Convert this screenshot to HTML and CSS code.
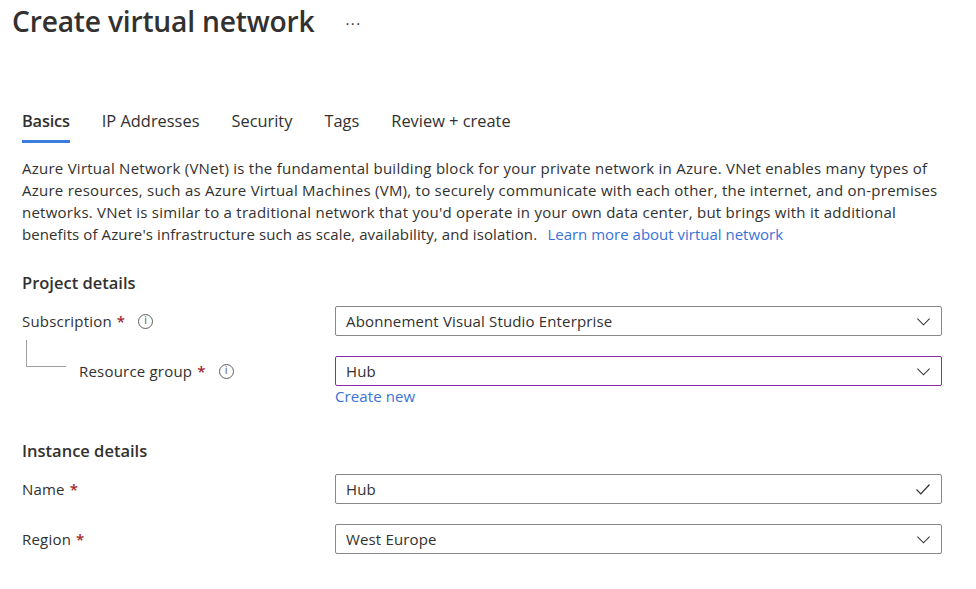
FILE: index.html
```html
<!DOCTYPE html>
<html lang="en">
<head>
<meta charset="utf-8">
<title>Create virtual network</title>
<link rel="stylesheet" href="styles.css">
</head>
<body>
<header class="page-header">
  <h1 class="title">Create virtual network</h1>
  <span class="more">···</span>
</header>
<main class="content">
  <nav class="tabs">
    <span class="tab active">Basics</span>
    <span class="tab">IP Addresses</span>
    <span class="tab">Security</span>
    <span class="tab">Tags</span>
    <span class="tab">Review + create</span>
  </nav>
  <p class="intro">Azure Virtual Network (VNet) is the fundamental building block for your private network in Azure. VNet enables many types of<br>Azure resources, such as Azure Virtual Machines (VM), to securely communicate with each other, the internet, and on-premises<br>networks. VNet is similar to a traditional network that you'd operate in your own data center, but brings with it additional<br><span class="tight">benefits of Azure's infrastructure such as scale, availability, and isolation.</span> <a class="link" href="#">Learn more about virtual network</a></p>

  <h2 class="section">Project details</h2>
  <div class="row">
    <div class="label">Subscription <span class="req">*</span><span class="info">i</span></div>
    <div class="field">
      <div class="select">Abonnement Visual Studio Enterprise<svg class="chev" viewBox="0 0 16 16"><path d="M1.5 5 L8 11.5 L14.5 5" fill="none" stroke="#323130" stroke-width="1.1"/></svg></div>
    </div>
  </div>
  <div class="row row-next">
    <div class="label label-child"><span class="tree"></span>Resource group <span class="req">*</span><span class="info">i</span></div>
    <div class="field">
      <div class="select select-focus">Hub<svg class="chev" viewBox="0 0 16 16"><path d="M1.5 5 L8 11.5 L14.5 5" fill="none" stroke="#323130" stroke-width="1.1"/></svg></div>
      <a class="link create" href="#">Create new</a>
    </div>
  </div>

  <h2 class="section section-2">Instance details</h2>
  <div class="row">
    <div class="label">Name <span class="req">*</span></div>
    <div class="field">
      <div class="select">Hub<svg class="check" viewBox="0 0 16 16"><path d="M1.5 8.5 L5.8 12.8 L14.5 3.5" fill="none" stroke="#323130" stroke-width="1.2"/></svg></div>
    </div>
  </div>
  <div class="row row-next">
    <div class="label">Region <span class="req">*</span></div>
    <div class="field">
      <div class="select">West Europe<svg class="chev" viewBox="0 0 16 16"><path d="M1.5 5 L8 11.5 L14.5 5" fill="none" stroke="#323130" stroke-width="1.1"/></svg></div>
    </div>
  </div>
</main>
</body>
</html>
```
FILE: styles.css
```css
* { box-sizing: border-box; }
html, body {
  margin: 0;
  background: #ffffff;
  color: #323130;
  font-family: "Open Sans", "Noto Sans", sans-serif;
}
.page-header {
  display: flex;
  align-items: center;
  padding: 0 0 0 12px;
  height: 42px;
}
.title {
  margin: 0;
  font-size: 28.2px;
  font-weight: 600;
  color: #323130;
  letter-spacing: -0.2px;
}
.more {
  margin-left: 31px;
  margin-top: 3px;
  font-size: 15px;
  color: #323130;
  letter-spacing: 1.5px;
}
.content {
  padding: 0 0 0 22px;
}
.tabs {
  display: flex;
  gap: 32px;
  margin-top: 68px;
  font-size: 16.4px;
}
.tab {
  padding-bottom: 8px;
  border-bottom: 3px solid transparent;
  line-height: 22px;
}
.tab.active {
  font-weight: 600;
  letter-spacing: -0.2px;
  border-bottom-color: #3b7ddd;
}
.intro {
  margin: 14px 0 0 0;
  font-size: 15px;
  letter-spacing: 0.25px;
  line-height: 22px;
  width: 950px;
}
.tight { letter-spacing: 0.1px; }
.link {
  color: #3a72d8;
  text-decoration: none;
  margin-left: 6px;
  letter-spacing: 0;
}
.section {
  margin: 27px 0 0 0;
  font-size: 16.5px;
  font-weight: 600;
  line-height: 22px;
}
.section-2 { margin-top: 34px; }
.row {
  display: flex;
  align-items: flex-start;
  margin-top: 12px;
}
.row-next { margin-top: 20px; }
.label {
  width: 313px;
  font-size: 15px;
  letter-spacing: 0.2px;
  line-height: 30px;
  display: flex;
  align-items: center;
  position: relative;
}
.label-child { padding-left: 57px; }
.tree {
  position: absolute;
  left: 4px;
  top: -16px;
  width: 40px;
  height: 27px;
  border-left: 1px solid #a19f9d;
  border-bottom: 1px solid #a19f9d;
}
.req {
  color: #a4262c;
  margin-left: 5px;
  font-weight: 600;
}
.info {
  display: inline-flex;
  align-items: center;
  justify-content: center;
  width: 15px;
  height: 15px;
  border: 1px solid #605e5c;
  border-radius: 50%;
  font-size: 10px;
  line-height: 1;
  margin-left: 13px;
  color: #605e5c;
  letter-spacing: 0;
  font-family: "DejaVu Sans", sans-serif;
}
.field {
  width: 607px;
  display: flex;
  flex-direction: column;
}
.select {
  height: 30px;
  border: 1px solid #8a8886;
  border-radius: 2px;
  display: flex;
  align-items: center;
  justify-content: space-between;
  padding: 0 10px 0 10px;
  font-size: 15px;
  letter-spacing: 0.15px;
}
.select-focus { border-color: #8a2aa8; }
.chev { width: 15px; height: 15px; }
.check { width: 16px; height: 16px; }
.create {
  margin: 0;
  font-size: 15px;
  letter-spacing: 0.1px;
  line-height: 20px;
}
```
